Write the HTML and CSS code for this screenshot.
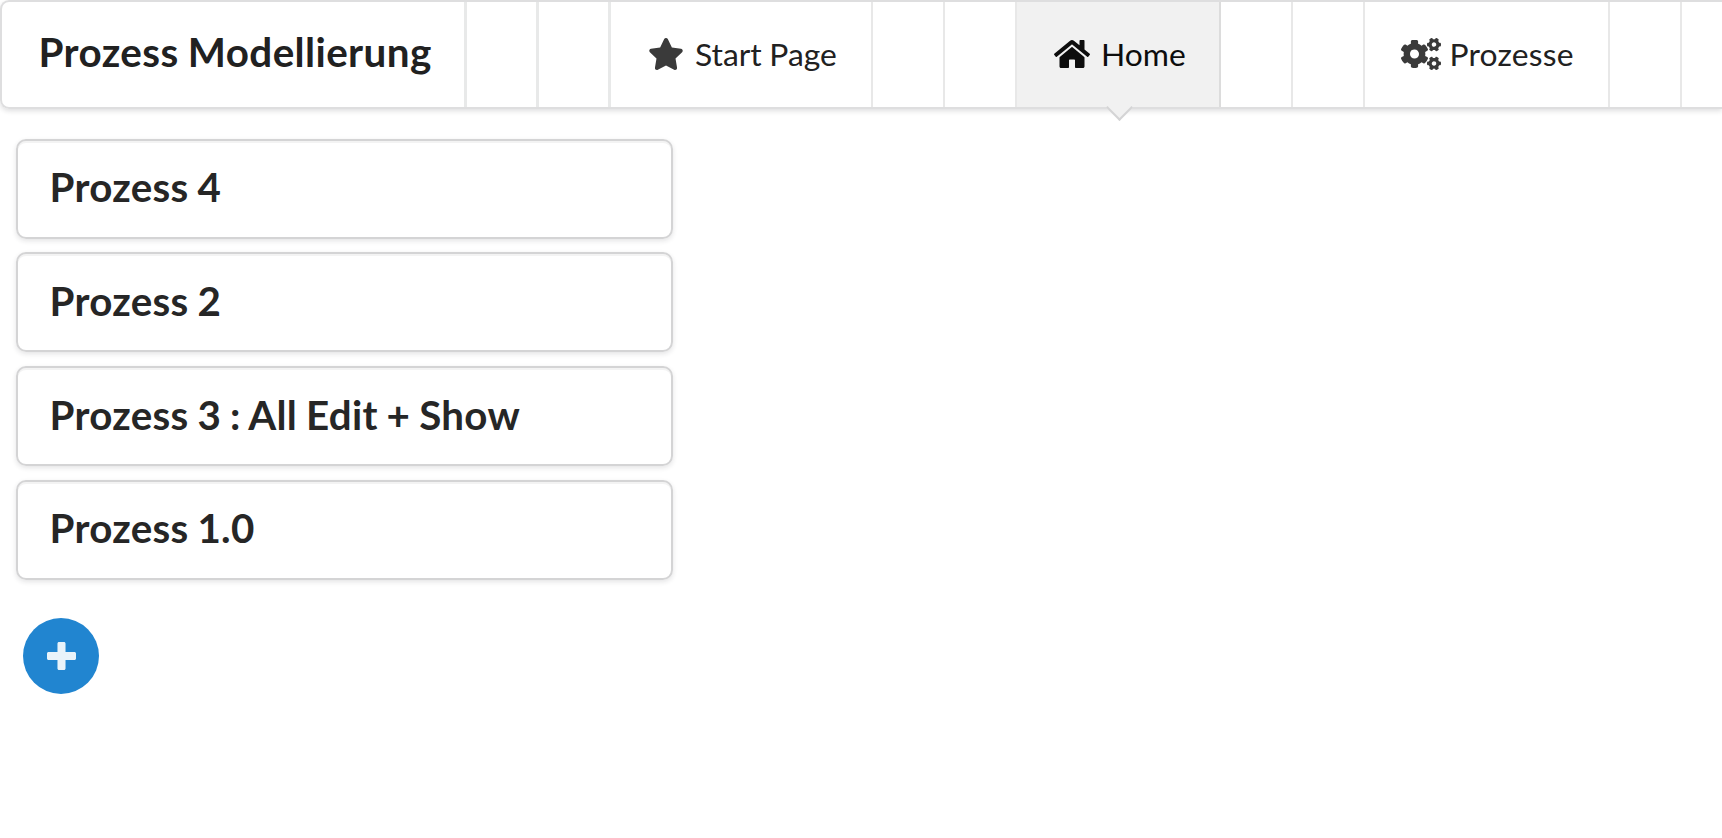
FILE: index.html
```html
<!DOCTYPE html>
<html lang="de">
<head>
<meta charset="utf-8">
<title>Prozess Modellierung</title>
<link rel="stylesheet" href="styles.css">
</head>
<body>
<nav class="menu">
  <div class="item header">Prozess Modellierung</div>
  <div class="item spacer wide"></div>
  <div class="item spacer wide"></div>
  <a class="item start">
    <svg class="icon" viewBox="0 0 576 512"><path d="M259.3 17.8L194 150.2 47.9 171.5c-26.2 3.8-36.7 36.1-17.7 54.6l105.7 103-25 145.5c-4.5 26.3 23.2 46 46.4 33.7L288 439.6l130.7 68.7c23.2 12.2 50.9-7.4 46.4-33.7l-25-145.5 105.7-103c19-18.5 8.5-50.8-17.7-54.6L382 150.2 316.7 17.8c-11.7-23.6-45.6-23.9-57.4 0z"/></svg>
    <span class="label">Start Page</span>
  </a>
  <div class="item spacer"></div>
  <div class="item spacer"></div>
  <a class="item home active">
    <svg class="icon" viewBox="0 0 576 512"><path d="M488 312.7V456c0 13.3-10.7 24-24 24H348c-6.6 0-12-5.4-12-12V356c0-6.6-5.4-12-12-12h-72c-6.6 0-12 5.4-12 12v112c0 6.6-5.4 12-12 12H112c-13.3 0-24-10.7-24-24V312.7c0-3.6 1.6-7 4.4-9.3l188-154.8c4.4-3.6 10.8-3.6 15.3 0l188 154.8c2.7 2.3 4.3 5.7 4.3 9.3zm83.6-60.9L488 182.9V44.4c0-6.6-5.4-12-12-12h-56c-6.6 0-12 5.4-12 12V117l-89.5-73.7c-17.7-14.6-43.3-14.6-61 0L4.4 251.8c-5.1 4.2-5.8 11.8-1.6 16.9l25.5 31c4.2 5.1 11.8 5.8 16.9 1.6l235.2-193.7c4.4-3.6 10.8-3.6 15.3 0l235.2 193.7c5.1 4.2 12.7 3.5 16.9-1.6l25.5-31c4.2-5.2 3.4-12.7-1.7-16.9z"/></svg>
    <span class="label">Home</span>
  </a>
  <div class="item spacer"></div>
  <div class="item spacer"></div>
  <a class="item processes">
    <svg class="icon cogs" viewBox="0 0 640 512"><path id="cog" d="M512.1 191l-8.2 14.3c-3 5.3-9.4 7.5-15.1 5.4-11.8-4.4-22.6-10.7-32.1-18.6-4.6-3.8-5.8-10.5-2.8-15.7l8.2-14.3c-6.9-8-12.3-17.3-15.9-27.4h-16.5c-6 0-11.2-4.3-12.2-10.3-2-12-2.1-24.6 0-37.1 1-6 6.2-10.4 12.2-10.4h16.5c3.6-10.1 9-19.4 15.9-27.4l-8.2-14.3c-3-5.2-1.9-11.9 2.8-15.7 9.5-7.9 20.4-14.2 32.1-18.6 5.7-2.1 12.1.1 15.1 5.4l8.2 14.3c10.5-1.9 21.2-1.9 31.7 0L552 6.3c3-5.3 9.4-7.5 15.1-5.4 11.8 4.4 22.6 10.7 32.1 18.6 4.6 3.8 5.8 10.5 2.8 15.7l-8.2 14.3c6.9 8 12.3 17.3 15.9 27.4h16.5c6 0 11.2 4.3 12.2 10.3 2 12 2.1 24.6 0 37.1-1 6-6.2 10.4-12.2 10.4h-16.5c-3.6 10.1-9 19.4-15.9 27.4l8.2 14.3c3 5.2 1.9 11.9-2.8 15.7-9.5 7.9-20.4 14.2-32.1 18.6-5.7 2.1-12.1-.1-15.1-5.4l-8.2-14.3c-10.4 1.9-21.2 1.9-31.7 0zm-10.5-58.8c38.5 29.6 82.4-14.3 52.8-52.8-38.5-29.7-82.4 14.3-52.8 52.8z"/><use href="#cog" y="301"/><path d="M386.3 286.1l33.7 16.8c10.1 5.8 14.5 18.1 10.5 29.1-8.9 24.2-26.4 46.4-42.6 65.8-7.4 8.9-20.2 11.1-30.3 5.3l-29.1-16.8c-16 13.7-34.6 24.6-54.9 31.7v33.6c0 11.6-8.3 21.6-19.7 23.6-24.6 4.2-50.4 4.4-75.9 0-11.5-2-20-11.9-20-23.6V418c-20.3-7.2-38.9-18-54.9-31.7L74 403c-10 5.8-22.9 3.6-30.3-5.3-16.2-19.4-33.3-41.6-42.2-65.7-4-10.9.4-23.2 10.5-29.1l33.3-16.8c-3.9-20.9-3.9-42.4 0-63.4L12 205.8c-10.1-5.8-14.6-18.1-10.5-29 8.9-24.2 26-46.4 42.2-65.8 7.4-8.9 20.2-11.1 30.3-5.3l29.1 16.8c16-13.7 34.6-24.6 54.9-31.7V57.1c0-11.5 8.2-21.5 19.6-23.5 24.6-4.2 50.5-4.4 76-.1 11.5 2 20 11.9 20 23.6v33.6c20.3 7.2 38.9 18 54.9 31.7l29.1-16.8c10-5.8 22.9-3.6 30.3 5.3 16.2 19.4 33.2 41.6 42.1 65.8 4 10.9.1 23.2-10 29.1l-33.7 16.8c3.9 21 3.9 42.5 0 63.5zm-117.6 21.1c59.2-77-28.7-164.9-105.7-105.7-59.2 77 28.7 164.9 105.7 105.7z"/></svg>
    <span class="label">Prozesse</span>
  </a>
  <div class="item spacer"></div>
  <div class="item rest"></div>
</nav>
<main class="content">
  <div class="list">
    <div class="card">Prozess 4</div>
    <div class="card">Prozess 2</div>
    <div class="card">Prozess 3 : All Edit + Show</div>
    <div class="card">Prozess 1.0</div>
  </div>
  <button class="add" aria-label="Neuer Prozess">
    <svg class="plus" viewBox="0 0 448 448" preserveAspectRatio="none"><path transform="translate(0 -32)" d="M448 294.2v-76.4c0-13.3-10.7-24-24-24H286.2V56c0-13.3-10.7-24-24-24h-76.4c-13.3 0-24 10.7-24 24v137.8H24c-13.3 0-24 10.7-24 24v76.4c0 13.3 10.7 24 24 24h137.8V456c0 13.3 10.7 24 24 24h76.4c13.3 0 24-10.7 24-24V318.2H424c13.3 0 24-10.7 24-24z"/></svg>
  </button>
</main>
</body>
</html>
```
FILE: styles.css
```css
* {
  box-sizing: border-box;
}

body {
  margin: 0;
  height: 838px;
  overflow: hidden;
  background: #fff;
  color: #212121;
  font-family: Lato, "Liberation Sans", sans-serif;
  font-size: 31.8px;
}

.menu {
  display: flex;
  height: 109px;
  border: 2px solid #dededf;
  border-right: 0;
  border-radius: 9px 0 0 9px;
  box-shadow: 0 2px 5px rgba(34, 36, 38, 0.15);
}

.item {
  position: relative;
  display: flex;
  flex: none;
  align-items: center;
  padding: 0 0 2px 37px;
  border-right: 2px solid #e8e8e8;
  line-height: 32px;
  white-space: nowrap;
}

.header {
  width: 465px;
  padding: 0 0 6px 36.5px;
  border-right: 3px solid #e8e9e9;
  font-size: 40.4px;
  font-weight: 700;
  letter-spacing: 0.4px;
  word-spacing: -1px;
}

.spacer {
  width: 72px;
  padding: 0;
}

.rest {
  flex: 1;
  padding: 0;
  border-right: 0;
}

.wide {
  border-right: 3px solid #e8e9e9;
}

.start {
  width: 262px;
}

.home {
  width: 204px;
}

.processes {
  width: 245px;
  padding-left: 36px;
}

.label {
  word-spacing: -0.5px;
}

.processes .label {
  letter-spacing: 0.2px;
}

.active {
  background: #f1f1f1;
  border-right-color: #dcdcdc;
  color: #0d0d0d;
}

.active::after {
  content: "";
  position: absolute;
  left: 50%;
  bottom: -10px;
  width: 17px;
  height: 17px;
  margin-left: -8.5px;
  background: #f1f1f1;
  border: solid #d4d4d5;
  border-width: 0 2px 2px 0;
  transform: rotate(45deg);
}

.icon {
  flex: none;
  width: 36px;
  height: 32px;
  margin-right: 11px;
  fill: #3a3a3a;
}

.active .icon {
  fill: #0d0d0d;
}

.cogs {
  width: 40px;
  margin-right: 8.5px;
}

.content {
  padding: 29.8px 16px 0;
}

.list {
  display: flex;
  flex-direction: column;
  gap: 13.85px;
  width: 657px;
}

.card {
  display: flex;
  align-items: center;
  height: 99.85px;
  padding: 0 0 4px 31.5px;
  border: 2px solid #d4d4d5;
  border-radius: 10px;
  box-shadow: 0 2px 5px rgba(34, 36, 38, 0.12), inset 0 2px 0 #f3f3f3;
  color: #262626;
  font-size: 40.3px;
  font-weight: 700;
  letter-spacing: 0.3px;
  word-spacing: -1.2px;
}

.add {
  display: flex;
  align-items: center;
  justify-content: center;
  width: 76px;
  height: 76px;
  margin: 38px 0 0 7px;
  padding: 0;
  border: 0;
  border-radius: 50%;
  background: #2185d0;
}

.plus {
  width: 29px;
  height: 28px;
  fill: #e9f3fa;
}
```
